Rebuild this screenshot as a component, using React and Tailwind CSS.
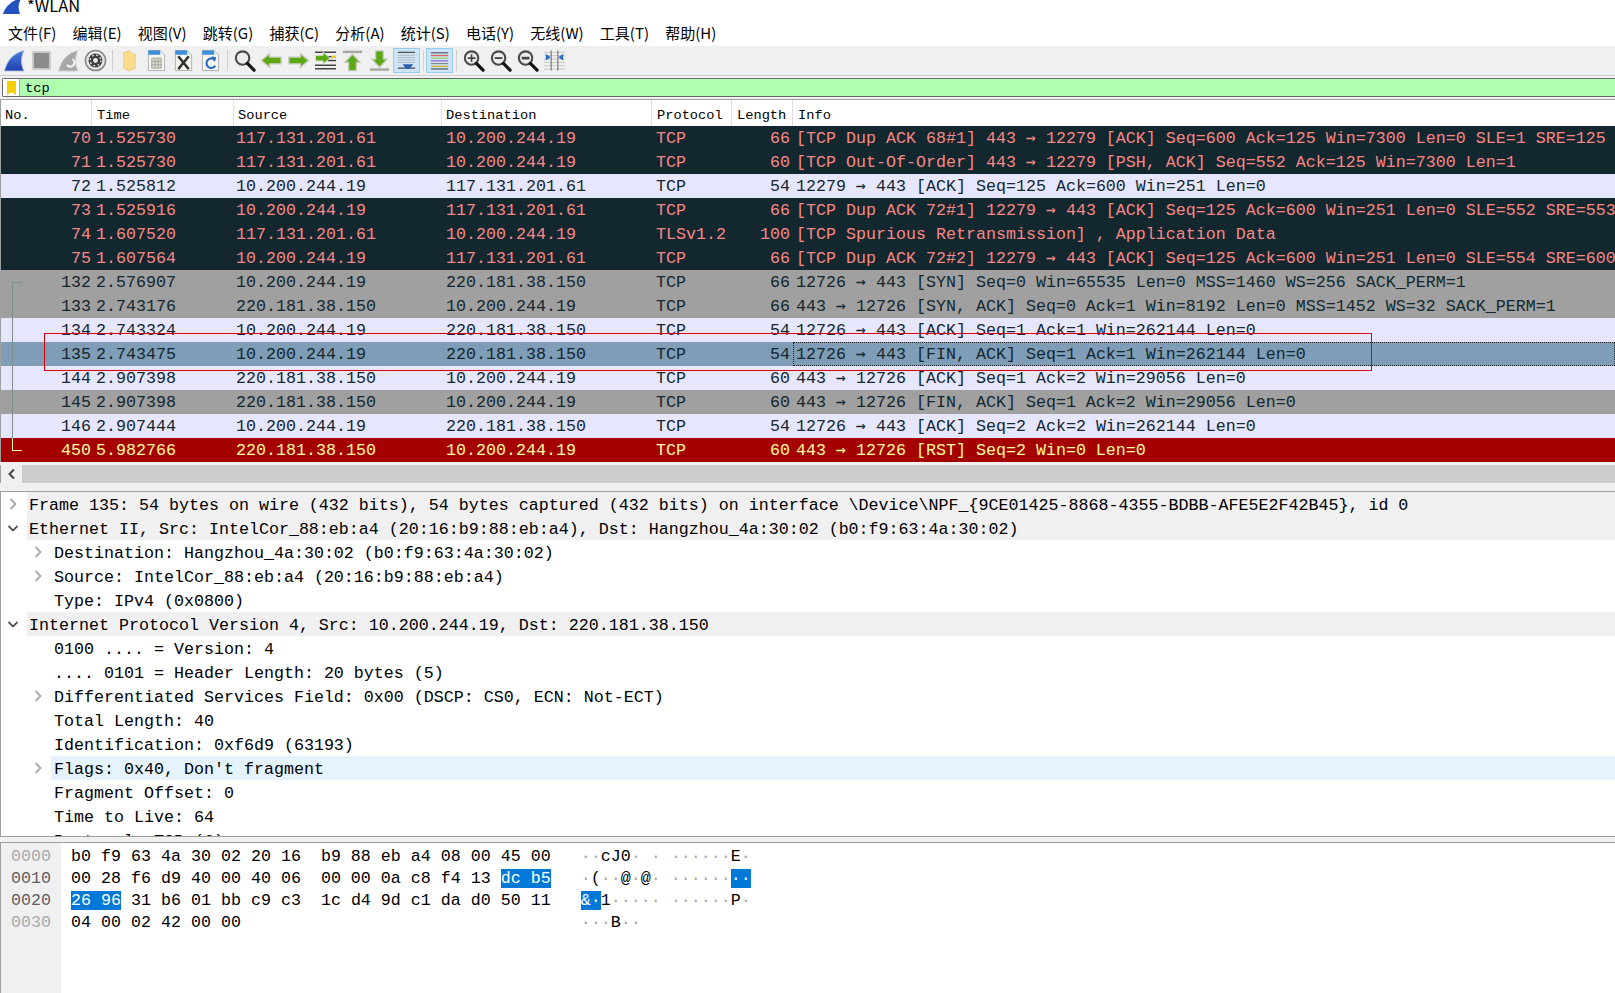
import React from 'react'

const mono = { fontFamily: '"Liberation Mono", monospace' }
const cjk = { fontFamily: '"Noto Sans CJK SC", sans-serif' }

const DARK = 'bg-[#12272e] text-[#f78787]'
const LIGHT = 'bg-[#e7e6ff] text-[#12272e]'
const GRAY = 'bg-[#a0a0a0] text-[#12272e]'
const RED = 'bg-[#a40000] text-[#fffc9c]'
const SEL = 'bg-[#7f9db6] text-[#12272e]'

const packets = [
  [DARK, '70', '1.525730', '117.131.201.61', '10.200.244.19', 'TCP', '66', '[TCP Dup ACK 68#1] 443 → 12279 [ACK] Seq=600 Ack=125 Win=7300 Len=0 SLE=1 SRE=125'],
  [DARK, '71', '1.525730', '117.131.201.61', '10.200.244.19', 'TCP', '60', '[TCP Out-Of-Order] 443 → 12279 [PSH, ACK] Seq=552 Ack=125 Win=7300 Len=1'],
  [LIGHT, '72', '1.525812', '10.200.244.19', '117.131.201.61', 'TCP', '54', '12279 → 443 [ACK] Seq=125 Ack=600 Win=251 Len=0'],
  [DARK, '73', '1.525916', '10.200.244.19', '117.131.201.61', 'TCP', '66', '[TCP Dup ACK 72#1] 12279 → 443 [ACK] Seq=125 Ack=600 Win=251 Len=0 SLE=552 SRE=553'],
  [DARK, '74', '1.607520', '117.131.201.61', '10.200.244.19', 'TLSv1.2', '100', '[TCP Spurious Retransmission] , Application Data'],
  [DARK, '75', '1.607564', '10.200.244.19', '117.131.201.61', 'TCP', '66', '[TCP Dup ACK 72#2] 12279 → 443 [ACK] Seq=125 Ack=600 Win=251 Len=0 SLE=554 SRE=600'],
  [GRAY, '132', '2.576907', '10.200.244.19', '220.181.38.150', 'TCP', '66', '12726 → 443 [SYN] Seq=0 Win=65535 Len=0 MSS=1460 WS=256 SACK_PERM=1'],
  [GRAY, '133', '2.743176', '220.181.38.150', '10.200.244.19', 'TCP', '66', '443 → 12726 [SYN, ACK] Seq=0 Ack=1 Win=8192 Len=0 MSS=1452 WS=32 SACK_PERM=1'],
  [LIGHT, '134', '2.743324', '10.200.244.19', '220.181.38.150', 'TCP', '54', '12726 → 443 [ACK] Seq=1 Ack=1 Win=262144 Len=0'],
  [SEL, '135', '2.743475', '10.200.244.19', '220.181.38.150', 'TCP', '54', '12726 → 443 [FIN, ACK] Seq=1 Ack=1 Win=262144 Len=0'],
  [LIGHT, '144', '2.907398', '220.181.38.150', '10.200.244.19', 'TCP', '60', '443 → 12726 [ACK] Seq=1 Ack=2 Win=29056 Len=0'],
  [GRAY, '145', '2.907398', '220.181.38.150', '10.200.244.19', 'TCP', '60', '443 → 12726 [FIN, ACK] Seq=1 Ack=2 Win=29056 Len=0'],
  [LIGHT, '146', '2.907444', '10.200.244.19', '220.181.38.150', 'TCP', '54', '12726 → 443 [ACK] Seq=2 Ack=2 Win=262144 Len=0'],
  [RED, '450', '5.982766', '220.181.38.150', '10.200.244.19', 'TCP', '60', '443 → 12726 [RST] Seq=2 Win=0 Len=0'],
]

// level, arrow (r / d / none), text, text background
const details = [
  [0, 'r', 'Frame 135: 54 bytes on wire (432 bits), 54 bytes captured (432 bits) on interface \\Device\\NPF_{9CE01425-8868-4355-BDBB-AFE5E2F42B45}, id 0', 'bg-[#f0f0f0]'],
  [0, 'd', 'Ethernet II, Src: IntelCor_88:eb:a4 (20:16:b9:88:eb:a4), Dst: Hangzhou_4a:30:02 (b0:f9:63:4a:30:02)', 'bg-[#f0f0f0]'],
  [1, 'r', 'Destination: Hangzhou_4a:30:02 (b0:f9:63:4a:30:02)', ''],
  [1, 'r', 'Source: IntelCor_88:eb:a4 (20:16:b9:88:eb:a4)', ''],
  [1, '', 'Type: IPv4 (0x0800)', ''],
  [0, 'd', 'Internet Protocol Version 4, Src: 10.200.244.19, Dst: 220.181.38.150', 'bg-[#f0f0f0]'],
  [1, '', '0100 .... = Version: 4', ''],
  [1, '', '.... 0101 = Header Length: 20 bytes (5)', ''],
  [1, 'r', 'Differentiated Services Field: 0x00 (DSCP: CS0, ECN: Not-ECT)', ''],
  [1, '', 'Total Length: 40', ''],
  [1, '', 'Identification: 0xf6d9 (63193)', ''],
  [1, 'r', "Flags: 0x40, Don't fragment", 'bg-[#e5f3ff]'],
  [1, '', 'Fragment Offset: 0', ''],
  [1, '', 'Time to Live: 64', ''],
  [1, '', 'Protocol: TCP (6)', ''],
]

const menus = ['文件(F)', '编辑(E)', '视图(V)', '跳转(G)', '捕获(C)', '分析(A)', '统计(S)', '电话(Y)', '无线(W)', '工具(T)', '帮助(H)']

function Fin({ fill = 'url(#finBlue)', stroke = '#b9c4dc' }) {
  return <path d="M1.5 23 C4 12 11 4 22 1.5 C18.5 9 18.5 16 22 23 Z" fill={fill} stroke={stroke} strokeWidth="1" />
}

function Glass({ children }) {
  return (
    <>
      <circle cx="10" cy="9.5" r="7" fill="#eceeea" stroke="#4a4a4a" strokeWidth="2.2" />
      <path d="M15 15 L22 22" stroke="#111" strokeWidth="3.4" strokeLinecap="round" />
      {children}
    </>
  )
}

function Page({ children }) {
  return (
    <>
      <path d="M3.5 1.5 H16 L20.5 6 V22.5 H3.5 Z" fill="#f6f6ee" stroke="#aab0b8" />
      <path d="M3.5 1.5 H16 V6 H3.5 Z" fill="#3d8ed8" />
      <path d="M16 1.5 L20.5 6 H16 Z" fill="#d5e6f5" />
      {children}
    </>
  )
}

const ArrowLeft = () => <path d="M1.5 12 L10 5 V8.5 H22 V15.5 H10 V19 Z" fill="#5ca814" stroke="#c4cbbd" strokeWidth="1.4" />
const ArrowRight = () => <path d="M22.5 12 L14 5 V8.5 H2 V15.5 H14 V19 Z" fill="#5ca814" stroke="#c4cbbd" strokeWidth="1.4" />

const icons = {
  fin: (
    <>
      <defs>
        <linearGradient id="finBlue" x1="0" y1="0" x2="0" y2="1">
          <stop offset="0" stopColor="#4f7fe0" />
          <stop offset="1" stopColor="#1c3fb0" />
        </linearGradient>
      </defs>
      <Fin />
    </>
  ),
  stop: <rect x="3" y="3" width="18" height="18" fill="#8c8c8c" stroke="#d0d0d0" strokeWidth="2" />,
  restart: (
    <>
      <Fin fill="#a8a8a8" stroke="#d4d4d4" />
      <path d="M16 10.5 A4.2 4.2 0 1 1 10.5 16.5" fill="none" stroke="#f4f4f4" strokeWidth="2.2" />
    </>
  ),
  gear: (
    <>
      <circle cx="12" cy="12" r="10.5" fill="#e8e8e8" stroke="#8a8a8a" strokeWidth="1.6" />
      <circle cx="12" cy="12" r="7.2" fill="#3c3c3c" />
      <circle cx="12" cy="12" r="5.6" fill="none" stroke="#e8e8e8" strokeWidth="1.4" strokeDasharray="2 2.4" />
      <circle cx="12" cy="12" r="2.6" fill="#e8e8e8" />
    </>
  ),
  folder: <path d="M6 4 L12 1.5 V3.5 L18 5.5 V20 L12 23 L6 20 Z" fill="#fbdc8c" stroke="#e8c878" strokeWidth="0.8" />,
  file: (
    <Page>
      <path d="M7 9.5 H17 V20 H7 Z M7 13 H17 M7 16.5 H17 M10.5 9.5 V20 M13.8 9.5 V20" fill="#d8d8d0" stroke="#9a9a94" strokeWidth="0.8" />
    </Page>
  ),
  close: (
    <Page>
      <path d="M6.5 7.5 L17.5 21 M17.5 7.5 L6.5 21" stroke="#333" strokeWidth="2.6" />
    </Page>
  ),
  reload: (
    <Page>
      <path d="M16.5 11.5 A5 5 0 1 0 17 17.5" fill="none" stroke="#2a6cc0" strokeWidth="2.2" />
      <path d="M13 7.5 L18 8.5 L16.5 13.5 Z" fill="#2a6cc0" />
    </Page>
  ),
  find: <Glass />,
  back: <ArrowLeft />,
  forward: <ArrowRight />,
  jump: (
    <>
      <path d="M1 3.5 H23 M14 8 H23 M14 12 H23 M1 17 H23 M1 20.5 H23" stroke="#444" strokeWidth="1.6" />
      <path d="M18 8 H23" stroke="#f0d020" strokeWidth="2.2" />
      <path d="M16.5 9.5 L9.5 3 V6.5 H1.5 V12.5 H9.5 V16 Z" fill="#5ca814" stroke="#e0e4da" strokeWidth="1" />
    </>
  ),
  first: (
    <>
      <path d="M2 3 H22" stroke="#a8a8a0" strokeWidth="2.6" />
      <path d="M12 5.5 L20 14 H16 V22.5 H8 V14 H4 Z" fill="#5ca814" stroke="#c4cbbd" strokeWidth="1.3" />
    </>
  ),
  last: (
    <>
      <path d="M2 21.5 H22" stroke="#a8a8a0" strokeWidth="2.6" />
      <path d="M12 19 L20 10.5 H16 V2 H8 V10.5 H4 Z" fill="#5ca814" stroke="#c4cbbd" strokeWidth="1.3" />
    </>
  ),
  auto: (
    <>
      <path d="M3 3.5 H21" stroke="#555" strokeWidth="1.4" />
      <path d="M3 6.5 H21 M3 9 H21 M3 11.5 H21 M3 14 H21" stroke="#b8b8b8" strokeWidth="1" />
      <path d="M3 20 H21" stroke="#555" strokeWidth="1.4" />
      <path d="M8 16 H19 L15.5 20.5 H11.5 Z" fill="#2a5fae" />
    </>
  ),
  color: (
    <>
      <path d="M3 4 H21" stroke="#555" strokeWidth="1.2" />
      <path d="M3 6.8 H21" stroke="#d9605a" strokeWidth="1.4" />
      <path d="M3 9.6 H21" stroke="#9ccf6e" strokeWidth="1.4" />
      <path d="M3 12.4 H21" stroke="#8a78c8" strokeWidth="1.4" />
      <path d="M3 15.2 H21" stroke="#888" strokeWidth="1.2" />
      <path d="M3 18 H21" stroke="#d8b030" strokeWidth="1.4" />
      <path d="M3 20.8 H21" stroke="#555" strokeWidth="1.2" />
    </>
  ),
  zoomIn: (
    <Glass>
      <path d="M6 9.5 H14 M10 5.5 V13.5" stroke="#444" strokeWidth="1.7" />
    </Glass>
  ),
  zoomOut: (
    <Glass>
      <path d="M6 9.5 H14" stroke="#444" strokeWidth="1.9" />
    </Glass>
  ),
  zoomReset: (
    <Glass>
      <path d="M6 9.5 H14" stroke="#444" strokeWidth="2.8" />
    </Glass>
  ),
  resize: (
    <>
      <path d="M1 3.5 H23 M1 7 H23 M1 10.5 H23 M1 14 H23 M1 17.5 H23 M1 21 H23" stroke="#c4c4c4" strokeWidth="1" />
      <path d="M8.5 1.5 V22.5 M15.5 1.5 V22.5" stroke="#777" strokeWidth="1.2" />
      <path d="M3 5 L8 8.5 L3 12 Z M21 5 L16 8.5 L21 12 Z" fill="#2a6cc0" />
    </>
  ),
}

const toolbar = ['fin', 'stop', 'restart', 'gear', '|a', 'folder', 'file', 'close', 'reload', '|a', 'find', 'back', 'forward', 'jump', 'first', 'last', 'auto*', '|b', 'color*', '|a', 'zoomIn', 'zoomOut', 'zoomReset', 'resize']

function Toolbar() {
  return (
    <div className="h-[30px] flex items-center pl-[1px] bg-[#f0f0f0] border-b border-[#cfcfcf] shrink-0">
      {toolbar.map((t, i) => {
        if (t[0] === '|') {
          return (
            <div key={i} className={t === '|a' ? 'w-[7px] flex justify-center' : 'w-[6px] flex justify-center'}>
              <div className="w-px h-[21px] bg-[#d0d0d0]" />
            </div>
          )
        }
        const active = t.endsWith('*')
        const name = t.replace('*', '')
        return (
          <div key={i} className={active ? 'w-[27px] h-[25px] flex items-center justify-center bg-[#cce4f7] border border-[#99ccf0]' : 'w-[27px] h-[25px] flex items-center justify-center'}>
            <svg width="23" height="23" viewBox="0 0 24 24">{icons[name]}</svg>
          </div>
        )
      })}
    </div>
  )
}

function Chevron({ dir }) {
  return (
    <svg width="12" height="12" viewBox="0 0 12 12" fill="none" stroke={dir === 'r' ? '#a8a8a8' : '#555'} strokeWidth="1.8">
      {dir === 'r' ? <path d="M3.5 1 L8.5 6 L3.5 11" /> : <path d="M1.5 4 L6 8.5 L10.5 4" />}
    </svg>
  )
}

// the font's own arrow is short, DejaVu's has the width of the cell
function Info({ text }) {
  const [a, b] = text.split('→')
  if (b === undefined) return text
  return (
    <>
      {a}<span className="text-[16.6px] leading-none" style={{ fontFamily: '"DejaVu Sans Mono", monospace' }}>→</span>{b}
    </>
  )
}

function PacketRow({ p, idx }) {
  const [cls, no, time, src, dst, proto, len, info] = p
  return (
    <div className={`flex h-[24px] pt-[3px] leading-[20px] whitespace-pre overflow-hidden relative ${cls}`}>
      <div className="w-[91px] text-right pr-[1px] shrink-0">{no}</div>
      <div className="w-[142px] pl-[4px] shrink-0">{time}</div>
      <div className="w-[208px] pl-[2px] shrink-0">{src}</div>
      <div className="w-[210px] pl-[4px] shrink-0">{dst}</div>
      <div className="w-[80px] pl-[4px] shrink-0">{proto}</div>
      <div className="w-[61px] text-right pr-[3px] shrink-0">{len}</div>
      <div className="flex-1 pl-[3px]"><Info text={info} /></div>
      {idx === 9 && <div className="absolute left-[792px] right-0 top-0 bottom-0 border border-dotted border-[#222]" />}
    </div>
  )
}

const GB = 'text-[#a8a8a8]'

function Hex() {
  const sel = 'bg-[#0078d7] text-white'
  const row = 'h-[22px] leading-[22px] whitespace-pre'
  return (
    <div className="flex-1 flex bg-white border-l border-[#a0a0a0] overflow-hidden">
      <div className="w-[60px] bg-[#f0f0f0] pl-[10px] pt-[3px] shrink-0">
        <div className={`${row} text-[#a8a8a8]`}>0000</div>
        <div className={`${row} text-[#606060]`}>0010</div>
        <div className={`${row} text-[#606060]`}>0020</div>
        <div className={`${row} text-[#a8a8a8]`}>0030</div>
      </div>
      <div className="pl-[10px] pt-[3px] text-black">
        <div className={row}>b0 f9 63 4a 30 02 20 16  b9 88 eb a4 08 00 45 00   <span className={GB}>··</span>cJ0<span className={GB}>· ·</span> <span className={GB}>······</span>E<span className={GB}>·</span></div>
        <div className={row}>00 28 f6 d9 40 00 40 06  00 00 0a c8 f4 13 <span className={sel}>dc b5</span>   <span className={GB}>·</span>(<span className={GB}>··</span>@<span className={GB}>·</span>@<span className={GB}>·</span> <span className={GB}>······</span><span className={sel}>··</span></div>
        <div className={row}><span className={sel}>26 96</span> 31 b6 01 bb c9 c3  1c d4 9d c1 da d0 50 11   <span className={sel}>&·</span>1<span className={GB}>·····</span> <span className={GB}>······</span>P<span className={GB}>·</span></div>
        <div className={row}>04 00 02 42 00 00                                  <span className={GB}>···</span>B<span className={GB}>··</span></div>
      </div>
    </div>
  )
}

export default function App() {
  return (
    <div className="h-screen w-screen overflow-hidden flex flex-col bg-white text-[16.67px] relative" style={mono}>
      {/* title bar, cut off at the top of the shot */}
      <div className="h-[20px] bg-white flex items-end pl-[2px] overflow-hidden shrink-0">
        <svg width="20" height="16" viewBox="0 0 20 16" className="mb-[6px]">
          <path d="M1 16 C3 9 9 3 19 0 V1 C16 6 16 11 18 16 Z" fill="#2450c0" />
        </svg>
        <span className="ml-[5px] text-[16.5px] leading-[20px] mb-[5px] text-black" style={cjk}>*WLAN</span>
      </div>

      <div className="h-[26px] bg-white flex items-center pl-[8px] gap-[16.2px] shrink-0 text-[15px] text-black" style={cjk}>
        {menus.map(m => <span key={m}>{m}</span>)}
      </div>

      <Toolbar />

      {/* display filter */}
      <div className="h-[24px] bg-[#f0f0f0] pt-[2px] shrink-0 border-b border-[#a0a0a0]">
        <div className="h-[19px] ml-[2px] flex bg-[#afffaf] border border-[#6a6a6a] border-r-0 rounded-l-[2px]">
          <div className="w-[17px] bg-white border-r border-[#a8a8a8] flex items-center justify-center">
            <svg width="9" height="14" viewBox="0 0 9 14"><path d="M0 0 H9 V14 L4.5 11 L0 14 Z" fill="#f5d000" /></svg>
          </div>
          <div className="pl-[5px] pt-[2px] text-[13.7px] leading-[16px] text-black">tcp</div>
        </div>
      </div>

      {/* packet list header */}
      <div className="h-[26px] flex bg-white text-[13.7px] leading-[20px] text-black border-l border-[#a0a0a0] shrink-0">
        <div className="w-[91px] pl-[4px] pt-[6px] border-r border-[#e0e0e0]">No.</div>
        <div className="w-[142px] pl-[5px] pt-[6px] border-r border-[#e0e0e0]">Time</div>
        <div className="w-[208px] pl-[4px] pt-[6px] border-r border-[#e0e0e0]">Source</div>
        <div className="w-[210px] pl-[4px] pt-[6px] border-r border-[#e0e0e0]">Destination</div>
        <div className="w-[80px] pl-[5px] pt-[6px] border-r border-[#e0e0e0]">Protocol</div>
        <div className="w-[61px] pl-[5px] pt-[6px] border-r border-[#e0e0e0]">Length</div>
        <div className="flex-1 pl-[5px] pt-[6px]">Info</div>
      </div>

      {/* packet list */}
      <div className="relative border-l border-[#a0a0a0] shrink-0">
        {packets.map((p, i) => <PacketRow key={p[1]} p={p} idx={i} />)}
        <div className="absolute left-[11px] top-[156px] w-[10px] h-px bg-[#7f9090]" />
        <div className="absolute left-[11px] top-[156px] w-px h-[156px] bg-[#7f9090]" />
        <div className="absolute left-[11px] top-[312px] w-px h-[12px] bg-[#fffc9c]" />
        <div className="absolute left-[11px] top-[324px] w-[10px] h-px bg-[#fffc9c]" />
      </div>

      {/* scrollbar */}
      <div className="h-[30px] bg-[#f0f0f0] shrink-0 pt-[3px] border-b border-[#a0a0a0]">
        <div className="h-[18px] flex border-l border-[#a0a0a0]">
          <div className="w-[21px] flex items-center justify-center">
            <svg width="12" height="12" viewBox="0 0 12 12" fill="none" stroke="#444" strokeWidth="2"><path d="M8 1.5 L3.5 6 L8 10.5" /></svg>
          </div>
          <div className="flex-1 bg-[#cdcdcd]" />
        </div>
      </div>

      {/* packet details */}
      <div className="h-[344px] bg-white border-l border-[#a0a0a0] overflow-hidden shrink-0 text-black">
        {details.map(([lvl, arrow, text, bg], i) => (
          <div key={i} className="h-[24px] flex whitespace-pre">
            <div className={lvl === 0 ? 'w-[26px] pl-[6px] h-[24px] flex items-center shrink-0' : 'w-[50px] pl-[31px] h-[24px] flex items-center shrink-0'}>
              {arrow && <Chevron dir={arrow} />}
            </div>
            <div className={lvl === 0 ? `flex-1 pl-[2px] pt-[4px] leading-[20px] ${bg}` : `flex-1 pl-[3px] pt-[4px] leading-[20px] ${bg}`}>{text}</div>
          </div>
        ))}
      </div>

      <div className="h-[7px] bg-[#f0f0f0] border-y border-[#a0a0a0] shrink-0" />

      <Hex />

      {/* red annotation box */}
      <div className="absolute left-[44px] top-[333px] w-[1328px] h-[38px] border border-[#e0000c]" />
    </div>
  )
}
